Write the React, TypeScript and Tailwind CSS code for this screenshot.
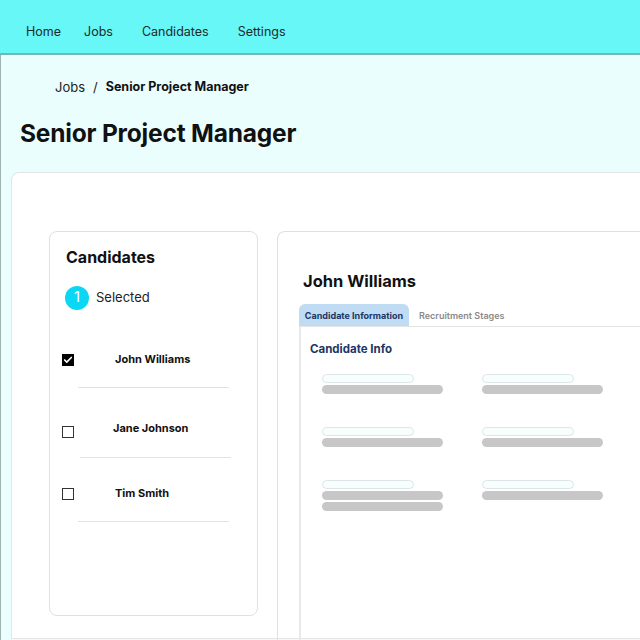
import { Check } from "lucide-react";

const candidates = [
  { name: "John Williams", checked: true, top: "mt-0", text: "pl-[41px] mt-[1px]", line: "ml-[28px] mt-[21px]" },
  { name: "Jane Johnson", checked: false, top: "mt-[35px]", text: "pl-[39px] -mt-[2px]", line: "ml-[30px] mt-[19px]" },
  { name: "Tim Smith", checked: false, top: "mt-[27px]", text: "pl-[41px] mt-[1px]", line: "ml-[28px] mt-[21px]" },
];

function Skeleton({ extra = false }: { extra?: boolean }) {
  return (
    <div className="flex flex-col gap-[2px]">
      <div className="h-[9px] w-[92px] rounded-full border border-[#dfe5e5] bg-[#f6fefe]" />
      <div className="h-[9px] w-[121px] rounded-full bg-[#c7c7c7]" />
      {extra && <div className="h-[9px] w-[121px] rounded-full bg-[#c7c7c7]" />}
    </div>
  );
}

export default function App() {
  return (
    <div className="h-[640px] w-[640px] overflow-hidden bg-[#ebfefe] font-['Inter',sans-serif] text-[#111]">
      {/* top nav */}
      <header className="flex h-[55px] items-start border-b-2 border-[#79b4b4] bg-[#67f7f7] pl-[26px] pt-[22px] text-[12.5px] leading-[20px] text-[#1d2b2b]">
        <span>Home</span>
        <span className="ml-[23px]">Jobs</span>
        <span className="ml-[29px]">Candidates</span>
        <span className="ml-[29px]">Settings</span>
      </header>

      <div className="h-[585px] border-l border-[#9fb3b3]">
        <nav className="flex items-center pl-[54px] pt-[23px] text-[13px]">
          <span className="text-[#222]">Jobs</span>
          <span className="mx-[8px] text-[#222]">/</span>
          <span className="text-[12.5px] font-bold">Senior Project Manager</span>
        </nav>
        <h1 className="mt-[20px] pl-[19px] text-[24.5px] font-bold leading-[30px] tracking-[-0.2px]">
          Senior Project Manager
        </h1>

        <div className="ml-[10px] mt-[24px] flex h-[467px] gap-[19px] rounded-tl-[8px] border border-r-0 border-[#e3e6e6] bg-white pl-[37px] pt-[58px]">
          {/* candidates list */}
          <aside className="h-[385px] w-[209px] shrink-0 rounded-[8px] border border-[#e0e0e0] pt-[13px]">
            <h2 className="pl-[16px] text-[16px] font-bold">Candidates</h2>
            <div className="mt-[17px] flex items-center gap-[7px] pl-[15px]">
              <span className="flex h-[24px] w-[24px] items-center justify-center rounded-full bg-[#0ad7f4] text-[15px] text-white">
                1
              </span>
              <span className="text-[13px] text-[#222]">Selected</span>
            </div>

            <ul className="mt-[41px]">
              {candidates.map((c) => (
                <li key={c.name} className={c.top}>
                  <div className="flex items-start pl-[12px]">
                    <span
                      className={`mt-[3px] flex h-[12px] w-[12px] shrink-0 items-center justify-center ${
                        c.checked ? "bg-black" : "border-[1.5px] border-[#333]"
                      }`}
                    >
                      {c.checked && <Check className="h-[10px] w-[10px] text-white" strokeWidth={4} />}
                    </span>
                    <span className={`${c.text} text-[11px] font-bold leading-[14px]`}>{c.name}</span>
                  </div>
                  <div className={`${c.line} h-px w-[151px] bg-[#e2e2e2]`} />
                </li>
              ))}
            </ul>
          </aside>

          {/* candidate detail */}
          <section className="h-[420px] flex-1 rounded-tl-[8px] border border-r-0 border-[#e0e0e0] pl-[21px] pt-[37px]">
            <h2 className="pl-[4px] text-[16.5px] font-bold">John Williams</h2>
            <div className="mt-[11px] flex items-end">
              <span className="flex h-[22px] w-[110px] items-center justify-center rounded-t-[6px] bg-[#bfdcf4] text-[9px] font-bold text-[#1b3563]">
                Candidate Information
              </span>
              <span className="ml-[10px] pb-[4px] text-[9px] font-semibold text-[#8a8a8a]">Recruitment Stages</span>
            </div>
            <div className="h-[400px] border-l-2 border-t border-l-[#e8e8e8] border-t-[#e4e4e4] pl-[9px] pt-[14px]">
              <h3 className="text-[11.5px] font-bold text-[#1c3566]">Candidate Info</h3>
              <div className="ml-[12px] mt-[15px] grid w-[290px] grid-cols-2 gap-x-[29px] gap-y-[33px]">
                <Skeleton />
                <Skeleton />
                <Skeleton />
                <Skeleton />
                <Skeleton extra />
                <Skeleton />
              </div>
            </div>
          </section>
        </div>
      </div>
    </div>
  );
}
